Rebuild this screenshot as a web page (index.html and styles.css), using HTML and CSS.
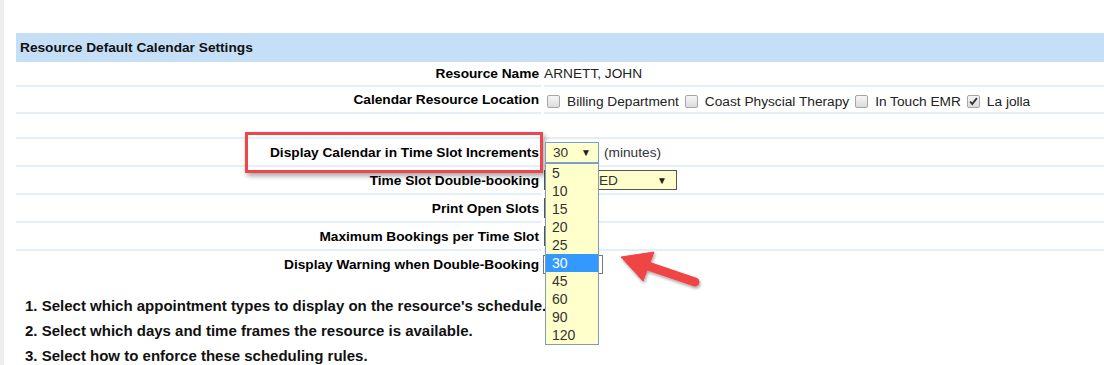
FILE: index.html
```html
<!DOCTYPE html>
<html lang="en">
<head>
    <meta charset="UTF-8">
    <title>Resource Default Calendar Settings</title>
    <link rel="stylesheet" href="styles.css">
</head>
<body>
    <div class="shell">
        <div class="gutter"></div>
        <main class="content">
            <div class="panel-title">Resource Default Calendar Settings</div>

            <div class="row h25">
                <div class="label">Resource Name</div>
                <div class="value">ARNETT, JOHN</div>
            </div>
            <div class="row h27">
                <div class="label">Calendar Resource Location</div>
                <div class="value locations">
                    <span class="cb"></span><span class="loc">Billing Department</span>
                    <span class="cb"></span><span class="loc">Coast Physcial Therapy</span>
                    <span class="cb"></span><span class="loc">In Touch EMR</span>
                    <span class="cb checked"><svg viewBox="0 0 13 13" width="11" height="11"><path d="M2.5 6.5 L5 9.5 L10.5 2.5" fill="none" stroke="#333" stroke-width="2.2"/></svg></span><span class="loc">La jolla</span>
                </div>
            </div>
            <div class="row h25">
                <div class="label"></div>
                <div class="value"></div>
            </div>
            <div class="row h28">
                <div class="label">Display Calendar in Time Slot Increments</div>
                <div class="value">
                    <div class="dd-wrap">
                        <span class="dd focused"><span>30</span><span class="caret">&#9660;</span></span>
                        <ul class="dd-list">
                            <li>5</li>
                            <li>10</li>
                            <li>15</li>
                            <li>20</li>
                            <li>25</li>
                            <li class="selected">30</li>
                            <li>45</li>
                            <li>60</li>
                            <li>90</li>
                            <li>120</li>
                        </ul>
                    </div>
                    <span class="unit">(minutes)</span>
                </div>
            </div>
            <div class="row h28">
                <div class="label">Time Slot Double-booking</div>
                <div class="value">
                    <span class="dd wide"><span>ALLOWED</span><span class="caret">&#9660;</span></span>
                </div>
            </div>
            <div class="row h28">
                <div class="label">Print Open Slots</div>
                <div class="value"><span class="dd small"><span>No</span></span></div>
            </div>
            <div class="row h28">
                <div class="label">Maximum Bookings per Time Slot</div>
                <div class="value"><span class="dd small"><span>1</span></span></div>
            </div>
            <div class="row h26 last">
                <div class="label">Display Warning when Double-Booking</div>
                <div class="value"><span class="textbox"></span></div>
            </div>

            <ol class="steps">
                <li>Select which appointment types to display on the resource's schedule.</li>
                <li>Select which days and time frames the resource is available.</li>
                <li>Select how to enforce these scheduling rules.</li>
            </ol>
        </main>

        <div class="callout"></div>
        <svg class="pointer" width="100" height="55" viewBox="0 0 100 55">
            <defs>
                <filter id="sh" x="-20%" y="-30%" width="150%" height="170%">
                    <feDropShadow dx="1" dy="2" stdDeviation="1.6" flood-color="#000" flood-opacity="0.35"/>
                </filter>
            </defs>
            <g filter="url(#sh)" fill="#f04545" stroke="#f04545">
                <line x1="30" y1="19" x2="83" y2="37" stroke-width="9" stroke-linecap="round"/>
                <polygon points="9,12 42,7 31,36" stroke-width="1" stroke-linejoin="round"/>
            </g>
        </svg>
    </div>
</body>
</html>
```

FILE: styles.css
```css
body {
    margin: 0;
    font-family: "Liberation Sans", Arial, sans-serif;
    color: #222;
    background: #fff;
}
.shell {
    position: relative;
    display: flex;
    min-height: 365px;
    overflow: hidden;
}
.gutter {
    width: 4px;
    background: #eeeeee;
}
.content {
    flex: 1;
    padding: 33px 0 0 12px;
}
.panel-title {
    height: 29px;
    line-height: 29px;
    padding-left: 4px;
    background: #c5dff7;
    font-size: 13.7px;
    font-weight: bold;
    color: #111;
}
.row {
    display: grid;
    grid-template-columns: 525px 1fr;
    column-gap: 3px;
}
.row > div {
    display: flex;
    align-items: center;
    border-bottom: 2px solid #e4eef9;
    font-size: 13.7px;
}
.row.last > div {
    border-bottom: none;
}
.h25 { height: 25px; }
.h26 { height: 26px; }
.h27 { height: 27px; }
.h28 { height: 28px; }
.label {
    justify-content: flex-end;
    padding-right: 2px;
    font-weight: bold;
    color: #000;
}
.value {
    color: #222;
}
.locations {
    padding-top: 3px;
}
.cb {
    box-sizing: border-box;
    width: 13px;
    height: 13px;
    margin: 0 7px 0 3px;
    border: 1px solid #a6a6a6;
    border-radius: 2px;
    background: linear-gradient(#f6f6f6, #dcdcdc);
    display: inline-flex;
    align-items: center;
    justify-content: center;
}
.loc {
    margin-right: 3px;
}
.dd-wrap {
    position: relative;
    margin-left: 1px;
    z-index: 3;
}
.dd {
    box-sizing: border-box;
    display: inline-flex;
    justify-content: space-between;
    align-items: center;
    height: 20px;
    padding: 0 7px;
    border: 1px solid #555;
    background: #ffffcc;
    color: #333;
    font-size: 13.7px;
}
.dd.focused {
    width: 54px;
    height: 21px;
    border-color: #7aa0d6;
}
.dd.wide {
    width: 133px;
    padding-left: 6px;
    padding-right: 9px;
}
.dd.small {
    width: 48px;
}
.caret {
    font-size: 10px;
    color: #222;
}
.unit {
    margin-left: 5px;
    color: #333;
}
.dd-list {
    position: absolute;
    left: 0;
    top: 21px;
    width: 54px;
    box-sizing: border-box;
    margin: 0;
    padding: 0;
    list-style: none;
    border: 1px solid #7f9db9;
    background: #ffffcc;
}
.dd-list li {
    height: 18px;
    line-height: 18px;
    padding-left: 6px;
    font-size: 14px;
    color: #333;
}
.dd-list li.selected {
    background: #3399ff;
    color: #fff;
}
.textbox {
    box-sizing: border-box;
    display: inline-block;
    width: 60px;
    height: 19px;
    margin-left: -1px;
    border: 1px solid #777;
    background: #fff;
}
.steps {
    margin: 16px 0 0;
    padding-left: 9px;
    list-style-position: inside;
    font-size: 15px;
    font-weight: bold;
    line-height: 25px;
    color: #111;
}
.callout {
    position: absolute;
    left: 245px;
    top: 132px;
    width: 298px;
    height: 41px;
    box-sizing: border-box;
    border: 3px solid #ef464c;
    box-shadow: 2px 3px 5px rgba(0, 0, 0, 0.35);
}
.pointer {
    position: absolute;
    left: 612px;
    top: 245px;
}
```
